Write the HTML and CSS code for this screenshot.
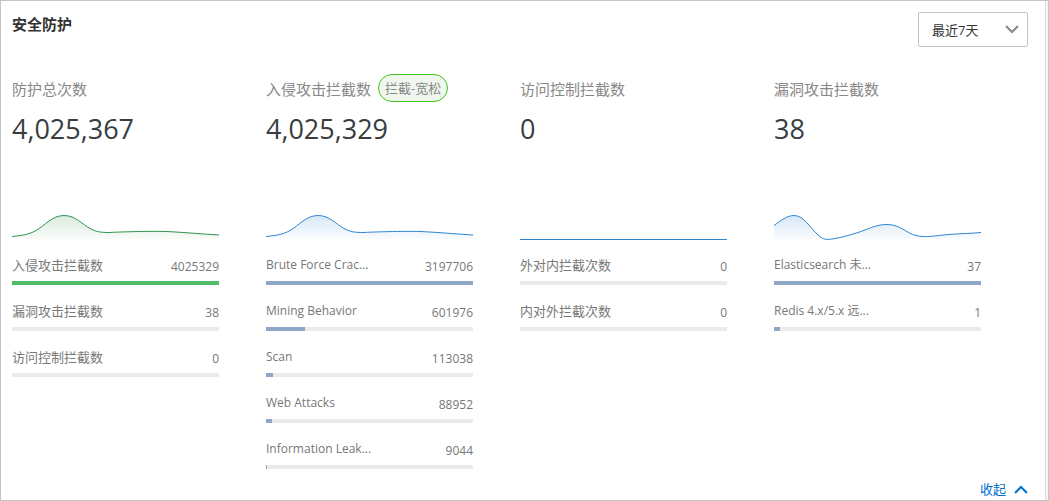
FILE: index.html
```
<!DOCTYPE html>
<html lang="zh-CN">
<head>
    <meta charset="UTF-8">
    <meta name="viewport" content="width=device-width, initial-scale=1.0">
    <title>安全防护</title>
    <link rel="stylesheet" href="styles.css">
</head>
<body>

<main class="panel">
    <div class="content">
        <header class="panel-header">
            <h1>安全防护</h1>
            <div class="range">
                <select class="range-select" aria-label="时间范围">
                    <option>最近7天</option>
                </select>
                <svg class="range-arrow" width="14" height="9" viewBox="0 0 14 9" aria-hidden="true"><path d="M1 1 L7 7 L13 1"/></svg>
            </div>
        </header>

        <div class="stats">
            <section class="stat total">
                <h2>防护总次数</h2>
                <p class="number">4,025,367</p>
                <svg class="chart" viewBox="0 0 207 28" preserveAspectRatio="none" aria-hidden="true">
                    <defs>
                        <linearGradient id="fill-green" x1="0" y1="0" x2="0" y2="1">
                            <stop offset="0" stop-color="#d9eadd"/>
                            <stop offset="1" stop-color="#fafcfa"/>
                        </linearGradient>
                    </defs>
                    <path fill="url(#fill-green)" d="M0 24.5 C10 23.5 17 22.5 24 18.5 C33 13.5 40 3.5 52 3.5 C64 3.5 70 12.5 79 17 C85 20 89 20.5 97 20.5 C107 20 135 19 155 19.5 C174 20.5 190 22 207 23 V27 H0 Z"/>
                    <path class="line" d="M0 24.5 C10 23.5 17 22.5 24 18.5 C33 13.5 40 3.5 52 3.5 C64 3.5 70 12.5 79 17 C85 20 89 20.5 97 20.5 C107 20 135 19 155 19.5 C174 20.5 190 22 207 23"/>
                </svg>
                <ul class="items">
                    <li><span class="name">入侵攻击拦截数</span><span class="value">4025329</span><div class="bar"><div class="bar-fill" style="width: 100%"></div></div></li>
                    <li><span class="name">漏洞攻击拦截数</span><span class="value">38</span><div class="bar"></div></li>
                    <li><span class="name">访问控制拦截数</span><span class="value">0</span><div class="bar"></div></li>
                </ul>
            </section>

            <section class="stat">
                <h2>入侵攻击拦截数 <span class="tag">拦截-宽松</span></h2>
                <p class="number">4,025,329</p>
                <svg class="chart" viewBox="0 0 207 28" preserveAspectRatio="none" aria-hidden="true">
                    <defs>
                        <linearGradient id="fill-blue" x1="0" y1="0" x2="0" y2="1">
                            <stop offset="0" stop-color="#d8e8f6"/>
                            <stop offset="1" stop-color="#fafcfe"/>
                        </linearGradient>
                    </defs>
                    <path fill="url(#fill-blue)" d="M0 24.5 C10 23.5 17 22.5 24 18.5 C33 13.5 40 3.5 52 3.5 C64 3.5 70 12.5 79 17 C85 20 89 20.5 97 20.5 C107 20 135 19 155 19.5 C174 20.5 190 22 207 23 V27 H0 Z"/>
                    <path class="line" d="M0 24.5 C10 23.5 17 22.5 24 18.5 C33 13.5 40 3.5 52 3.5 C64 3.5 70 12.5 79 17 C85 20 89 20.5 97 20.5 C107 20 135 19 155 19.5 C174 20.5 190 22 207 23"/>
                </svg>
                <ul class="items">
                    <li><span class="name latin">Brute Force Crac...</span><span class="value">3197706</span><div class="bar"><div class="bar-fill" style="width: 100%"></div></div></li>
                    <li><span class="name latin">Mining Behavior</span><span class="value">601976</span><div class="bar"><div class="bar-fill" style="width: 19%"></div></div></li>
                    <li><span class="name latin">Scan</span><span class="value">113038</span><div class="bar"><div class="bar-fill" style="width: 3.5%"></div></div></li>
                    <li><span class="name latin">Web Attacks</span><span class="value">88952</span><div class="bar"><div class="bar-fill" style="width: 2.8%"></div></div></li>
                    <li><span class="name latin">Information Leak...</span><span class="value">9044</span><div class="bar"><div class="bar-fill" style="width: 0.4%"></div></div></li>
                </ul>
            </section>

            <section class="stat">
                <h2>访问控制拦截数</h2>
                <p class="number">0</p>
                <svg class="chart" viewBox="0 0 207 28" preserveAspectRatio="none" aria-hidden="true">
                    <path class="line" d="M0 27.5 H207"/>
                </svg>
                <ul class="items">
                    <li><span class="name">外对内拦截次数</span><span class="value">0</span><div class="bar"></div></li>
                    <li><span class="name">内对外拦截次数</span><span class="value">0</span><div class="bar"></div></li>
                </ul>
            </section>

            <section class="stat">
                <h2>漏洞攻击拦截数</h2>
                <p class="number">38</p>
                <svg class="chart" viewBox="0 0 207 28" preserveAspectRatio="none" aria-hidden="true">
                    <path fill="url(#fill-blue)" d="M0 13.5 C7 8.5 13 3.5 20 3.5 C30 3.5 36 16 44 23 C49 27 50 28 58 27 C66 26 74 23.5 84 20.5 C94 17.5 101 12.5 113 12.5 C126 12.5 132 21 142 23.5 C152 26 162 23.5 175 22.5 C187 21.5 197 21.5 207 20.5 V27 H0 Z"/>
                    <path class="line" d="M0 13.5 C7 8.5 13 3.5 20 3.5 C30 3.5 36 16 44 23 C49 27 50 28 58 27 C66 26 74 23.5 84 20.5 C94 17.5 101 12.5 113 12.5 C126 12.5 132 21 142 23.5 C152 26 162 23.5 175 22.5 C187 21.5 197 21.5 207 20.5"/>
                </svg>
                <ul class="items">
                    <li><span class="name latin">Elasticsearch 未...</span><span class="value">37</span><div class="bar"><div class="bar-fill" style="width: 100%"></div></div></li>
                    <li><span class="name latin">Redis 4.x/5.x 远...</span><span class="value">1</span><div class="bar"><div class="bar-fill" style="width: 2.8%"></div></div></li>
                </ul>
            </section>
        </div>

        <footer class="panel-footer">
            <a href="#" class="collapse">收起
                <svg width="14" height="9" viewBox="0 0 14 9" aria-hidden="true"><path d="M1 8 L7 2 L13 8"/></svg>
            </a>
        </footer>
    </div>
</main>

</body>
</html>
```
FILE: styles.css
```
* {
    box-sizing: border-box;
}

body {
    margin: 0;
    font-family: "Open Sans", "Noto Sans CJK SC", sans-serif;
    font-size: 13px;
    color: #777;
    background-color: #fff;
}

.panel {
    min-height: 100vh;
    border: 1px solid #c4c4c4;
    padding-right: 2px;
    background-color: #f5f5f5;
    display: flex;
}

.content {
    flex: 1;
    padding: 11px 17px 0 11px;
    border-right: 1px solid #ddd;
    background-color: #fff;
}

.panel-header {
    display: flex;
    justify-content: space-between;
    align-items: flex-start;
}

h1 {
    margin: 0;
    font-size: 15px;
    line-height: 24px;
    font-weight: 700;
    color: #333;
}

.range {
    position: relative;
    width: 110px;
}

.range-select {
    appearance: none;
    display: block;
    width: 100%;
    height: 35px;
    padding: 0 13px;
    border: 1px solid #c0c5cc;
    border-radius: 2px;
    background-color: #fff;
    font-family: inherit;
    font-size: 13px;
    color: #333;
}

.range-arrow {
    position: absolute;
    top: 13px;
    right: 9px;
    pointer-events: none;
}

.range-arrow path {
    fill: none;
    stroke: #888;
    stroke-width: 2;
}

.stats {
    display: grid;
    grid-template-columns: repeat(4, 1fr);
    margin-top: 27px;
}

.stat {
    padding-right: 47px;
}

h2 {
    display: flex;
    align-items: center;
    gap: 7px;
    height: 28px;
    margin: 0;
    font-size: 15px;
    font-weight: 400;
    color: #888;
    white-space: nowrap;
}

.tag {
    padding: 0 6px;
    border: 1px solid #3fc21c;
    border-radius: 14px;
    background-color: #eff7ef;
    font-size: 13px;
    line-height: 26px;
}

.number {
    margin: 8px 0 0;
    font-size: 27px;
    line-height: 38px;
    color: #373d41;
}

.chart {
    display: block;
    width: 100%;
    height: 28px;
    margin-top: 64px;
}

.line {
    fill: none;
    stroke: #2d86d3;
    stroke-width: 1;
}

.total .line {
    stroke: #2b9549;
}

.items {
    list-style: none;
    margin: 0;
    padding: 15px 0 0;
}

.items li {
    display: grid;
    grid-template-columns: 1fr auto;
    margin-bottom: 16px;
    line-height: 20px;
}

.items li:last-child {
    margin-bottom: 10px;
}

.latin,
.value {
    font-size: 12px;
}

.value {
    padding-top: 2px;
}

.bar {
    grid-column: 1 / 3;
    height: 4px;
    margin-top: 4px;
    background-color: #ebebeb;
}

.bar-fill {
    height: 4px;
    background-color: #90a6c8;
}

.total .bar-fill {
    background-color: #52bd67;
}

.panel-footer {
    display: flex;
    justify-content: flex-end;
}

.collapse {
    display: flex;
    align-items: center;
    gap: 8px;
    line-height: 20px;
    color: #0070cc;
    text-decoration: none;
}

.collapse path {
    fill: none;
    stroke: #0070cc;
    stroke-width: 2;
}
```
